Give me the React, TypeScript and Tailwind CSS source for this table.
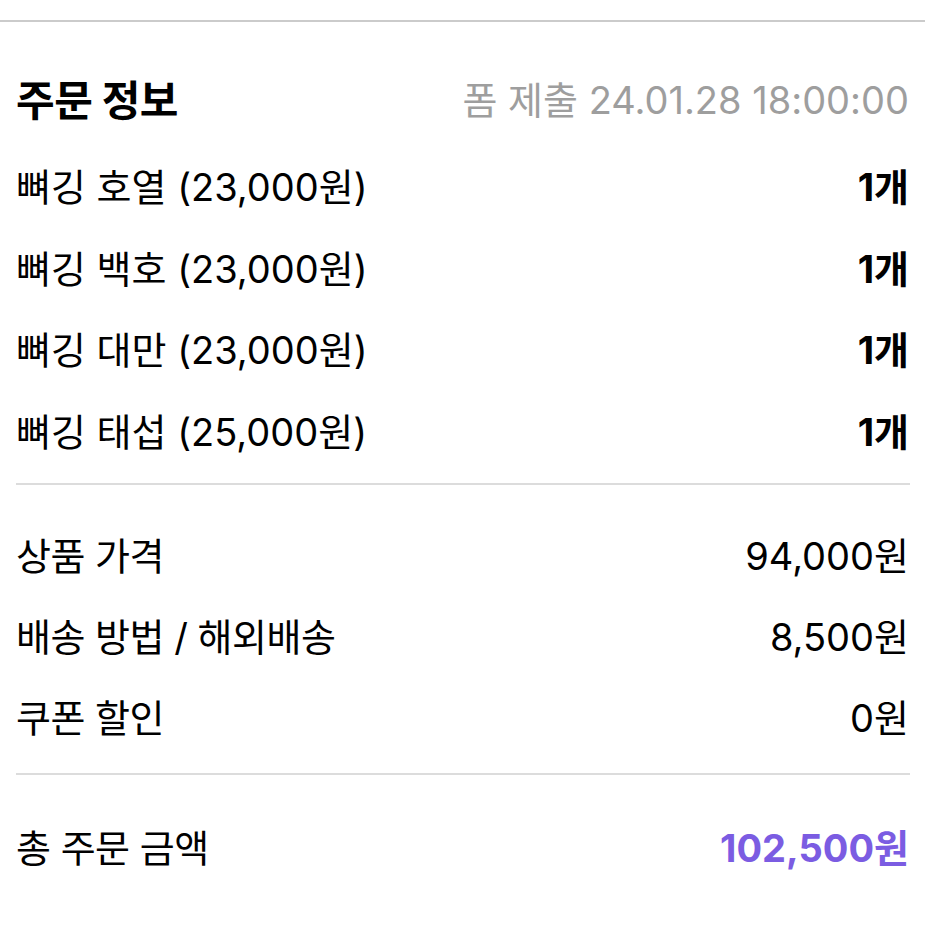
const font = { fontFamily: 'Inter, "Noto Sans CJK KR", sans-serif' };

const items = [
  { name: '뼈깅 호열 (23,000원)', qty: '1개' },
  { name: '뼈깅 백호 (23,000원)', qty: '1개' },
  { name: '뼈깅 대만 (23,000원)', qty: '1개' },
  { name: '뼈깅 태섭 (25,000원)', qty: '1개' },
];

const costs = [
  { label: '상품 가격', value: '94,000원' },
  { label: '배송 방법 / 해외배송', value: '8,500원' },
  { label: '쿠폰 할인', value: '0원' },
];

export default function App() {
  return (
    <div className="w-[925px] h-[925px] bg-white text-black overflow-hidden" style={font}>
      <div className="pt-[20px]">
        <div className="h-[2px] bg-[#cbcbcb]" />
      </div>

      <div className="pl-4 pr-[16px]">
        {/* Header */}
        <div className="mt-[37px] h-[82px] flex items-center justify-between">
          <h1 className="text-[42px] font-bold tracking-[-0.5px]">주문 정보</h1>
          <span className="text-[38px] text-[#9e9e9e]">폼 제출 24.01.28 18:00:00</span>
        </div>

        {/* Items */}
        <div className="mt-[6px]">
          {items.map((it) => (
            <div key={it.name} className="h-[81.5px] flex items-center justify-between text-[38px]">
              <span>{it.name}</span>
              <span className="font-bold">{it.qty}</span>
            </div>
          ))}
        </div>

        <div className="mt-[10px] h-[2px] bg-[#dcdcdc] mr-[-1px]" />

        {/* Costs */}
        <div className="mt-[31px]">
          {costs.map((c) => (
            <div key={c.label} className="h-[81px] flex items-center justify-between text-[38px]">
              <span className="tracking-[-0.5px]">{c.label}</span>
              <span>{c.value}</span>
            </div>
          ))}
        </div>

        <div className="mt-[14px] h-[2px] bg-[#dcdcdc] mr-[-1px]" />

        {/* Total */}
        <div className="mt-[33px] h-[81px] flex items-center justify-between text-[38px]">
          <span className="tracking-[-0.5px]">총 주문 금액</span>
          <span className="font-bold text-[#7b5ce2]">102,500원</span>
        </div>
      </div>
    </div>
  );
}
